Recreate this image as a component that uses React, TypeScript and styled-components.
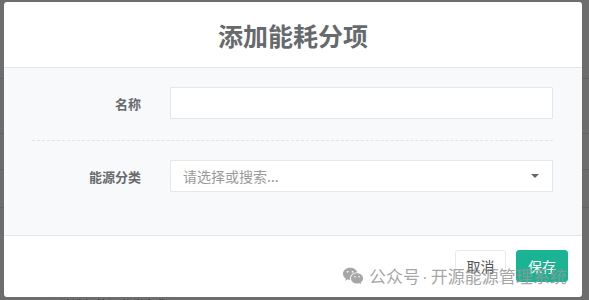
import React from "react";
import styled, { createGlobalStyle } from "styled-components";
import { RiWechatFill } from "react-icons/ri";

const Global = createGlobalStyle`
  html, body { margin: 0; padding: 0; }
  body {
    width: 589px;
    height: 300px;
    overflow: hidden;
    background: #6d6d6d;
    font-family: "Noto Sans CJK SC", "Noto Sans", sans-serif;
  }
`;

const Page = styled.div`
  position: relative;
  width: 589px;
  height: 300px;
  overflow: hidden;
  background: #6d6d6d;
`;

const BgRows = styled.div`
  display: flex;
  flex-direction: column;
  padding-top: 78px;
`;

const BgRow = styled.div<{ $h: number }>`
  height: ${(p) => p.$h}px;
  border-top: 1px solid #626262;
`;

const BgText = styled.div`
  position: absolute;
  left: 60px;
  top: 296px;
  font-size: 12px;
  color: #2d2d2d;
`;

const Modal = styled.div`
  position: absolute;
  left: 4px;
  top: 2px;
  width: 578px;
  height: 295px;
  background: #fff;
  border-radius: 3px;
  display: flex;
  flex-direction: column;
  overflow: hidden;
`;

const Header = styled.div`
  height: 65px;
  border-bottom: 1px solid #e5e5e5;
  display: flex;
  align-items: center;
  justify-content: center;
`;

const Title = styled.h4`
  margin: 0;
  font-size: 25px;
  font-weight: 700;
  color: #676a6c;
`;

const Body = styled.div`
  background: #f8f9fa;
  padding: 19px 29px 43px 28px;
  display: flex;
  flex-direction: column;
`;

const Row = styled.div`
  display: grid;
  grid-template-columns: 109px 383px;
  column-gap: 29px;
  align-items: center;
`;

const Label = styled.label`
  text-align: right;
  font-size: 13px;
  font-weight: 700;
  color: #676a6c;
`;

const Input = styled.div`
  height: 32px;
  box-sizing: border-box;
  background: #fff;
  border: 1px solid #e5e6e7;
  border-radius: 1px;
  display: flex;
  align-items: center;
  padding: 0 12px;
  font-size: 14px;
  color: #999;
`;

const Placeholder = styled.span`
  flex: 1;
  color: #9a9a9a;
`;

const Caret = styled.span`
  width: 0;
  height: 0;
  border-left: 4px solid transparent;
  border-right: 4px solid transparent;
  border-top: 4px solid #666;
  margin-right: 1px;
`;

const Divider = styled.div`
  border-top: 1px dashed #e2e3e4;
  margin: 21px 0 19px;
`;

const Footer = styled.div`
  flex: 1;
  border-top: 1px solid #e5e5e5;
  display: flex;
  justify-content: flex-end;
  align-items: flex-start;
  gap: 10px;
  padding: 14px 14px 0 0;
`;

const Button = styled.button<{ $primary?: boolean }>`
  height: 32px;
  width: ${(p) => (p.$primary ? 52 : 51)}px;
  box-sizing: border-box;
  border-radius: 3px;
  font-family: inherit;
  font-size: 14px;
  padding: 0;
  border: 1px solid ${(p) => (p.$primary ? "#1ab394" : "#e7eaec")};
  background: ${(p) => (p.$primary ? "#1ab394" : "#fff")};
  color: ${(p) => (p.$primary ? "#fff" : "#555")};
`;

const Watermark = styled.div`
  position: absolute;
  left: 342px;
  top: 263px;
  display: flex;
  align-items: center;
  gap: 5px;
  font-size: 17px;
  color: rgba(150, 150, 150, 0.85);
  pointer-events: none;
  white-space: nowrap;
`;

const Dot = styled.span`
  font-family: "Liberation Sans", sans-serif;
  margin: 0 3px 0 2px;
`;

export default function App() {
  return (
    <Page>
      <Global />
      <BgRows>
        <BgRow $h={54} />
        <BgRow $h={35} />
        <BgRow $h={37} />
        <BgRow $h={60} />
      </BgRows>
      <BgText>请选择能源分类名称</BgText>
      <Modal>
        <Header>
          <Title>添加能耗分项</Title>
        </Header>
        <Body>
          <Row>
            <Label>名称</Label>
            <Input />
          </Row>
          <Divider />
          <Row>
            <Label>能源分类</Label>
            <Input>
              <Placeholder>请选择或搜索...</Placeholder>
              <Caret />
            </Input>
          </Row>
        </Body>
        <Footer>
          <Button>取消</Button>
          <Button $primary>保存</Button>
        </Footer>
      </Modal>
      <Watermark>
        <RiWechatFill size={22} />
        <span>
          公众号<Dot>·</Dot>开源能源管理系统
        </span>
      </Watermark>
    </Page>
  );
}
